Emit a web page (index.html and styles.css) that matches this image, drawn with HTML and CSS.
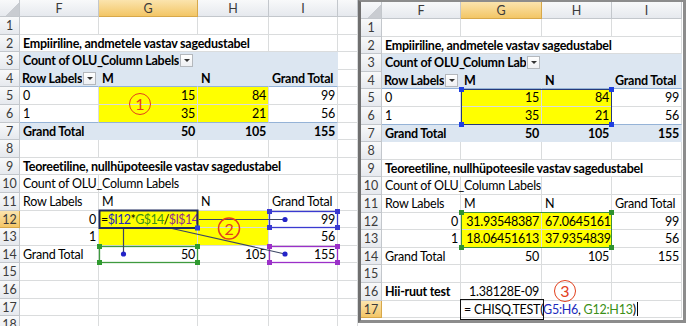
FILE: index.html
```html
<!DOCTYPE html>
<html lang="et">

<head>
    <meta charset="UTF-8">
    <title>Hii-ruut test</title>
    <link rel="stylesheet" href="styles.css">
</head>

<body>

    <!-- vasak leht: valemi sisestamine -->
    <div class="pane">
        <div class="sheet sheet-l">
            <div class="c hd corner"></div><div class="c hd">F</div><div class="c hd sel">G</div><div class="c hd">H</div><div class="c hd">I</div><div class="c hd"></div>

            <div class="c hd">1</div><div class="c"></div><div class="c"></div><div class="c"></div><div class="c"></div><div class="c"></div>

            <div class="c hd">2</div><div class="c b ov span3">Empiiriline, andmetele vastav sagedustabel</div><div class="c"></div><div class="c"></div>

            <div class="c hd">3</div><div class="c pv b ov">Count of OLU_</div><div class="c pv b dd"><span class="t">Column Labels</span><span class="btn"></span></div><div class="c pv"></div><div class="c pv"></div><div class="c"></div>

            <div class="c hd">4</div><div class="c pv b hl dd"><span class="t">Row Labels</span><span class="btn"></span></div><div class="c pv b hl">M</div><div class="c pv b hl">N</div><div class="c pv b hl">Grand Total</div><div class="c"></div>

            <div class="c hd">5</div><div class="c">0</div><div class="c y num">15</div><div class="c y num">84</div><div class="c num">99</div><div class="c"></div>

            <div class="c hd">6</div><div class="c tl">1</div><div class="c y num tl">35</div><div class="c y num tl">21</div><div class="c num tl">56</div><div class="c"></div>

            <div class="c hd">7</div><div class="c pv b">Grand Total</div><div class="c pv b num">50</div><div class="c pv b num">105</div><div class="c pv b num">155</div><div class="c"></div>

            <div class="c hd">8</div><div class="c"></div><div class="c"></div><div class="c"></div><div class="c"></div><div class="c"></div>

            <div class="c hd">9</div><div class="c b ov span4">Teoreetiline, nullhüpoteesile vastav sagedustabel</div><div class="c"></div>

            <div class="c hd">10</div><div class="c ov">Count of OLU_</div><div class="c">Column Labels</div><div class="c"></div><div class="c"></div><div class="c"></div>

            <div class="c hd">11</div><div class="c">Row Labels</div><div class="c">M</div><div class="c">N</div><div class="c">Grand Total</div><div class="c"></div>

            <div class="c hd sel">12</div><div class="c num">0</div><div class="c y fx"><span>=</span><span class="r-blue">$I12</span><span>*</span><span class="r-green">G$14</span><span>/</span><span class="r-purple">$I$14</span></div><div class="c y"></div><div class="c num">99</div><div class="c"></div>

            <div class="c hd">13</div><div class="c num">1</div><div class="c y"></div><div class="c y"></div><div class="c num">56</div><div class="c"></div>

            <div class="c hd">14</div><div class="c">Grand Total</div><div class="c num">50</div><div class="c num">105</div><div class="c num">155</div><div class="c"></div>

            <div class="c hd">15</div><div class="c"></div><div class="c"></div><div class="c"></div><div class="c"></div><div class="c"></div>
            <div class="c hd">16</div><div class="c"></div><div class="c"></div><div class="c"></div><div class="c"></div><div class="c"></div>
            <div class="c hd">17</div><div class="c"></div><div class="c"></div><div class="c"></div><div class="c"></div><div class="c"></div>
            <div class="c hd">18</div><div class="c"></div><div class="c"></div><div class="c"></div><div class="c"></div><div class="c"></div>
        </div>

        <div class="mark mark-1">1</div>

        <!-- viidete raamid ja jooned valemi juurest -->
        <svg class="refs" width="358" height="326" viewBox="0 0 358 326">
            <g fill="none" stroke-width="1.3">
                <rect x="269.5" y="211.5" width="68" height="16" stroke="#3a3ad0"/>
                <rect x="99.5" y="246.5" width="98" height="16" stroke="#3f9a3f"/>
                <rect x="269.5" y="246.5" width="68" height="16" stroke="#9b30c8"/>
            </g>
            <g fill="#3a3ad0">
                <rect x="267" y="209" width="5" height="5"/><rect x="335" y="209" width="5" height="5"/>
                <rect x="267" y="225" width="5" height="5"/><rect x="335" y="225" width="5" height="5"/>
            </g>
            <g fill="#2f9a2f">
                <rect x="97" y="244" width="5" height="5"/><rect x="195" y="244" width="5" height="5"/>
                <rect x="97" y="260" width="5" height="5"/><rect x="195" y="260" width="5" height="5"/>
            </g>
            <g fill="#9b30c8">
                <rect x="267" y="244" width="5" height="5"/><rect x="335" y="244" width="5" height="5"/>
                <rect x="267" y="260" width="5" height="5"/><rect x="335" y="260" width="5" height="5"/>
            </g>
            <g stroke="#3c4664" stroke-width="1.2">
                <line x1="199" y1="219.5" x2="285" y2="219.5"/>
                <line x1="123.5" y1="229" x2="123.5" y2="254"/>
                <line x1="172" y1="228.5" x2="285" y2="254"/>
            </g>
            <g fill="#2323c8">
                <circle cx="285" cy="219.5" r="2.6"/>
                <circle cx="123.5" cy="254" r="2.6"/>
                <circle cx="285" cy="254" r="2.6"/>
            </g>
            <!-- muudetav lahter G12 -->
            <rect x="99.5" y="210.5" width="98" height="17.5" fill="none" stroke="#1f2a5c" stroke-width="2"/>
            <rect x="195" y="225.5" width="5" height="5" fill="#2b3fd6"/>
            <circle cx="229" cy="228.5" r="10.5" fill="none" stroke="#e2401c" stroke-width="1.5"/>
            <text x="229" y="234.5" text-anchor="middle" class="mark-txt">2</text>
        </svg>
    </div>

    <!-- parem aken: tulemus -->
    <div class="window">
        <div class="sheet sheet-r">
            <div class="c hd corner"></div><div class="c hd">F</div><div class="c hd sel">G</div><div class="c hd">H</div><div class="c hd">I</div>

            <div class="c hd">1</div><div class="c"></div><div class="c"></div><div class="c"></div><div class="c"></div>

            <div class="c hd">2</div><div class="c b ov span4">Empiiriline, andmetele vastav sagedustabel</div>

            <div class="c hd">3</div><div class="c pv b ov">Count of OLU_</div><div class="c pv b dd"><span class="t">Column Labels</span><span class="btn"></span></div><div class="c pv"></div><div class="c pv"></div>

            <div class="c hd">4</div><div class="c pv b hl dd"><span class="t">Row Labels</span><span class="btn"></span></div><div class="c pv b hl">M</div><div class="c pv b hl">N</div><div class="c pv b hl">Grand Total</div>

            <div class="c hd">5</div><div class="c">0</div><div class="c y num">15</div><div class="c y num">84</div><div class="c num">99</div>

            <div class="c hd">6</div><div class="c tl">1</div><div class="c y num tl">35</div><div class="c y num tl">21</div><div class="c num tl">56</div>

            <div class="c hd">7</div><div class="c pv b">Grand Total</div><div class="c pv b num">50</div><div class="c pv b num">105</div><div class="c pv b num">155</div>

            <div class="c hd">8</div><div class="c"></div><div class="c"></div><div class="c"></div><div class="c"></div>

            <div class="c hd">9</div><div class="c b ov span4">Teoreetiline, nullhüpoteesile vastav sagedustabel</div>

            <div class="c hd">10</div><div class="c ov">Count of OLU_</div><div class="c">Column Labels</div><div class="c"></div><div class="c"></div>

            <div class="c hd">11</div><div class="c">Row Labels</div><div class="c">M</div><div class="c">N</div><div class="c">Grand Total</div>

            <div class="c hd">12</div><div class="c num">0</div><div class="c y num">31.93548387</div><div class="c y num">67.0645161</div><div class="c num">99</div>

            <div class="c hd">13</div><div class="c num">1</div><div class="c y num">18.06451613</div><div class="c y num">37.9354839</div><div class="c num">56</div>

            <div class="c hd">14</div><div class="c">Grand Total</div><div class="c num">50</div><div class="c num">105</div><div class="c num">155</div>

            <div class="c hd">15</div><div class="c"></div><div class="c"></div><div class="c"></div><div class="c"></div>

            <div class="c hd">16</div><div class="c b">Hii-ruut test</div><div class="c num">1.38128E-09</div><div class="c"></div><div class="c"></div>

            <div class="c hd sel">17</div><div class="c"></div><div class="c span3 fx-r"><span>= CHISQ.TEST(</span><span class="r-blue">G5:H6</span><span>, </span><span class="r-green">G12:H13</span><span>)</span><span class="caret"></span></div>
        </div>

        <div class="range range-blue"><i class="h tl"></i><i class="h tr"></i><i class="h bl"></i><i class="h br"></i></div>
        <div class="range range-green"><i class="h tl"></i><i class="h tr"></i><i class="h bl"></i><i class="h br"></i></div>
        <div class="mark mark-3">3</div>
    </div>

</body>

</html>
```

FILE: styles.css
```css
* {
    box-sizing: border-box;
}

body {
    margin: 0;
    width: 691px;
    height: 326px;
    overflow: hidden;
    display: flex;
    background: #fff;
    font-family: Lato, "Open Sans", sans-serif;
    font-size: 12.5px;
    letter-spacing: -0.25px;
    color: #000;
}

.pane {
    position: relative;
    width: 358px;
    flex-shrink: 0;
}

.window {
    position: relative;
    width: 328px;
    height: 323px;
    flex-shrink: 0;
    background: #fff;
    border: 3px solid #8c8c8c;
    border-top-width: 2px;
    border-left-color: #6f6f6f;
    overflow: hidden;
}

.sheet {
    display: grid;
}

.sheet-l {
    grid-template-columns: 20px 79px 99px 71px 69px 20px;
    grid-template-rows: 17px repeat(18, 17.6px);
}

.sheet-r {
    grid-template-columns: 21px 79px 81px 70px 70px;
    grid-template-rows: 17px repeat(17, 17.6px);
}

/* lahtrid */
.c {
    border-right: 1px solid #dadcdd;
    border-bottom: 1px solid #dadcdd;
    padding: 0 2px 0 3px;
    line-height: 17px;
    white-space: nowrap;
    overflow: hidden;
}

.ov {
    overflow: visible;
    position: relative;
    z-index: 1;
}

.span3 {
    grid-column: span 3;
}

.span4 {
    grid-column: span 4;
}

.b {
    font-weight: bold;
}

.num {
    text-align: right;
}

.y {
    background: #ffff00;
}

/* liigendtabeli stiil */
.pv {
    background: #dce6f1;
    border-right-color: #dce6f1;
    border-bottom-color: #dce6f1;
}

.pv.hl {
    border-bottom-color: #95b3d7;
}

.tl {
    border-bottom-color: #95b3d7;
}

/* rea- ja veerupäised */
.hd {
    background: linear-gradient(#f8f9fa, #e6e9ee);
    border-right-color: #c3c7cc;
    border-bottom-color: #c3c7cc;
    color: #3b3b3b;
    text-align: center;
    padding: 0;
    letter-spacing: 0;
}

.hd.sel {
    background: linear-gradient(#fbe4ae, #f3c666);
    border-right-color: #d7a84a;
    border-bottom-color: #d7a84a;
}

.corner {
    background: linear-gradient(135deg, transparent 62%, #c9ccd1 62%), linear-gradient(#f8f9fa, #e6e9ee);
}

/* filtri nupp */
.dd {
    display: flex;
    align-items: center;
    padding-left: 2px;
    padding-right: 1px;
}

.dd .t {
    overflow: hidden;
    min-width: 0;
}

.btn {
    flex-shrink: 0;
    width: 13px;
    height: 13px;
    margin-left: 1px;
    border: 1px solid #b4b8bd;
    background: linear-gradient(#ffffff, #eef0f3);
    position: relative;
}

.btn::after {
    content: "";
    position: absolute;
    left: 3px;
    top: 4px;
    border-left: 3px solid transparent;
    border-right: 3px solid transparent;
    border-top: 3px solid #333;
}

/* valemi värvid */
.r-blue {
    color: #1c2bbd;
}

.r-green {
    color: #3b8f18;
}

.r-purple {
    color: #8e2f8e;
}

.fx {
    padding-left: 2px;
    letter-spacing: -0.6px;
    overflow: visible;
}

.fx-r {
    position: relative;
    overflow: visible;
    background: #fff;
    padding-left: 3px;
    z-index: 1;
}

.fx-r::before {
    content: "";
    position: absolute;
    left: -1px;
    top: -2px;
    width: 82px;
    height: 19px;
    border: 1.5px solid #111;
}

.caret {
    display: inline-block;
    width: 1px;
    height: 14px;
    margin-left: 1px;
    vertical-align: -2px;
    background: #000;
}

.refs {
    position: absolute;
    left: 0;
    top: 0;
    pointer-events: none;
    z-index: 2;
}

.mark-txt {
    font-family: Lato, sans-serif;
    font-size: 16px;
    fill: #e2401c;
}

/* ringiga numbrid */
.mark {
    position: absolute;
    width: 22px;
    height: 22px;
    border: 1.5px solid #e2401c;
    border-radius: 50%;
    color: #e2401c;
    font-size: 16px;
    letter-spacing: 0;
    line-height: 19px;
    text-align: center;
    z-index: 3;
}

.mark-1 {
    left: 129px;
    top: 93px;
}

.mark-3 {
    left: 193px;
    top: 278px;
}

/* valitud vahemikud paremas aknas */
.range {
    position: absolute;
    left: 100px;
    width: 151px;
    z-index: 2;
}

.range-blue {
    top: 87px;
    height: 36px;
    border: 1.5px solid #263a7a;
}

.range-green {
    top: 210px;
    height: 36px;
    border: 1.5px solid #3e8f3e;
}

.h {
    position: absolute;
    width: 5px;
    height: 5px;
}

.range-blue .h {
    background: #1f3fe0;
}

.range-green .h {
    background: #2f922f;
}

.h.tl { left: -3px; top: -3px; }
.h.tr { right: -3px; top: -3px; }
.h.bl { left: -3px; bottom: -3px; }
.h.br { right: -3px; bottom: -3px; }
```
